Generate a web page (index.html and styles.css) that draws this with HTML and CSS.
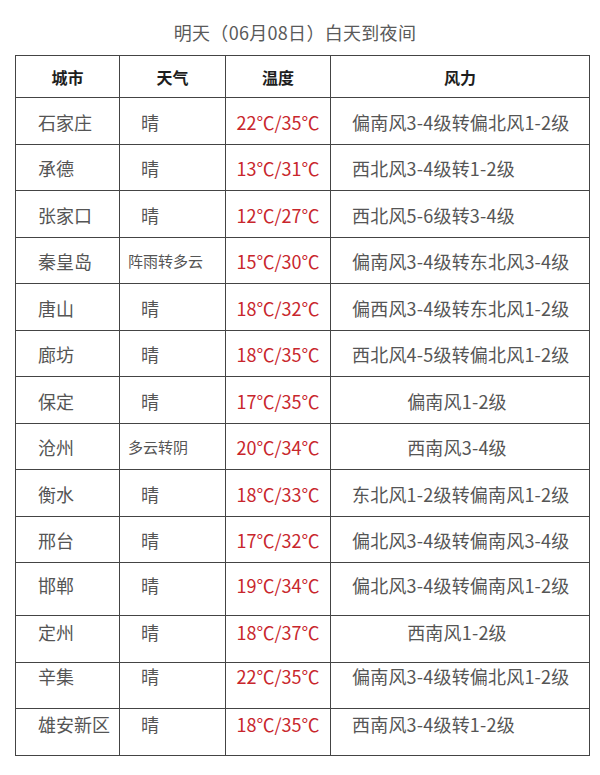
FILE: index.html
```html
<!DOCTYPE html>
<html lang="zh-CN">
<head>
<meta charset="utf-8">
<title>天气预报</title>
<link rel="stylesheet" href="styles.css">
</head>
<body>
<div class="title">明天（06月08日）白天到夜间</div>
<table class="wx">
  <colgroup>
    <col class="c-city"><col class="c-wea"><col class="c-temp"><col class="c-wind">
  </colgroup>
  <thead>
    <tr><th>城市</th><th>天气</th><th>温度</th><th>风力</th></tr>
  </thead>
  <tbody>
    <tr><td class="city">石家庄</td><td class="wea">晴</td><td class="temp">22℃/35℃</td><td class="wind">偏南风3-4级转偏北风1-2级</td></tr>
    <tr><td class="city">承德</td><td class="wea">晴</td><td class="temp">13℃/31℃</td><td class="wind">西北风3-4级转1-2级</td></tr>
    <tr><td class="city">张家口</td><td class="wea">晴</td><td class="temp">12℃/27℃</td><td class="wind">西北风5-6级转3-4级</td></tr>
    <tr><td class="city">秦皇岛</td><td class="wea small">阵雨转多云</td><td class="temp">15℃/30℃</td><td class="wind">偏南风3-4级转东北风3-4级</td></tr>
    <tr><td class="city">唐山</td><td class="wea">晴</td><td class="temp">18℃/32℃</td><td class="wind">偏西风3-4级转东北风1-2级</td></tr>
    <tr><td class="city">廊坊</td><td class="wea">晴</td><td class="temp">18℃/35℃</td><td class="wind">西北风4-5级转偏北风1-2级</td></tr>
    <tr><td class="city">保定</td><td class="wea">晴</td><td class="temp">17℃/35℃</td><td class="wind center">偏南风1-2级</td></tr>
    <tr><td class="city">沧州</td><td class="wea small">多云转阴</td><td class="temp">20℃/34℃</td><td class="wind center">西南风3-4级</td></tr>
    <tr><td class="city">衡水</td><td class="wea">晴</td><td class="temp">18℃/33℃</td><td class="wind">东北风1-2级转偏南风1-2级</td></tr>
    <tr><td class="city">邢台</td><td class="wea">晴</td><td class="temp">17℃/32℃</td><td class="wind">偏北风3-4级转偏南风3-4级</td></tr>
    <tr class="top t-a"><td class="city">邯郸</td><td class="wea">晴</td><td class="temp">19℃/34℃</td><td class="wind">偏北风3-4级转偏南风1-2级</td></tr>
    <tr class="top t-b"><td class="city">定州</td><td class="wea">晴</td><td class="temp">18℃/37℃</td><td class="wind center">西南风1-2级</td></tr>
    <tr class="top t-c"><td class="city">辛集</td><td class="wea">晴</td><td class="temp">22℃/35℃</td><td class="wind">偏南风3-4级转偏北风1-2级</td></tr>
    <tr class="top t-d"><td class="city">雄安新区</td><td class="wea">晴</td><td class="temp">18℃/35℃</td><td class="wind">西南风3-4级转1-2级</td></tr>
  </tbody>
</table>
</body>
</html>
```
FILE: styles.css
```css
html, body {
  margin: 0;
  padding: 0;
  background: #ffffff;
}
body {
  font-family: "Noto Sans CJK SC", "Noto Sans", sans-serif;
  color: #555;
}
.title {
  padding-top: 20px;
  padding-right: 10px;
  height: 24px;
  line-height: 24px;
  margin-bottom: 11px;
  font-size: 18px;
  letter-spacing: 0.3px;
  color: #5a5a5a;
  text-align: center;
}
.wx {
  margin-left: 15px;
  width: 574px;
  border-collapse: collapse;
  table-layout: fixed;
}
.c-city { width: 104px; }
.c-wea { width: 106px; }
.c-temp { width: 105px; }
.c-wind { width: 259px; }
.wx th, .wx td {
  border: 1px solid #444;
  padding: 0;
  white-space: nowrap;
  overflow: hidden;
}
.wx th {
  height: 41px;
  font-size: 16px;
  font-weight: bold;
  color: #1e1e1e;
  text-align: center;
}
.wx td {
  height: 43.5px;
  padding-top: 2px;
  font-size: 18px;
  line-height: 24px;
  vertical-align: middle;
}
.wx td.city { padding-left: 22px; }
.wx td.wea { padding-left: 21px; }
.wx td.wea.small { padding-left: 8px; font-size: 15px; }
.wx td.temp { text-align: center; color: #c8262c; }
.wx td.wind { padding-left: 21px; letter-spacing: 0.2px; }
.wx td.wind.center { padding-left: 0; text-align: center; padding-right: 6px; }
.wx tr.top td { vertical-align: top; }
.wx tr.t-a td { height: 42px; padding-top: 10px; }
.wx tr.t-b td { height: 42px; padding-top: 3.5px; }
.wx tr.t-c td { height: 44px; padding-top: 1.5px; }
.wx tr.t-d td { height: 43px; padding-top: 2.5px; }
```
